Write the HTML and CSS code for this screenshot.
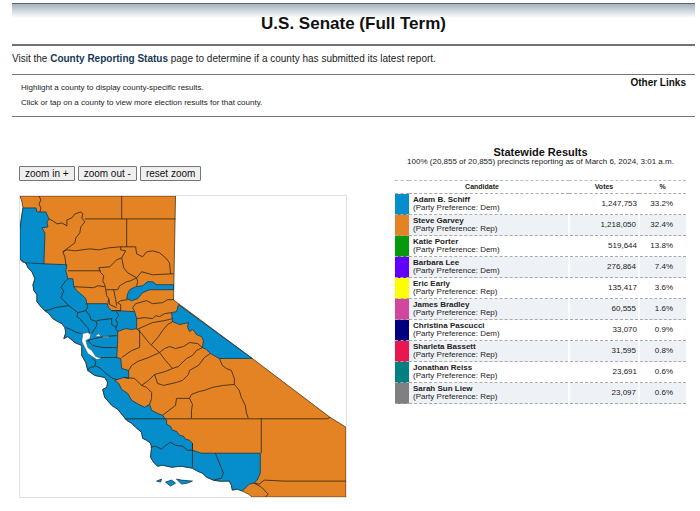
FILE: index.html
```html
<!DOCTYPE html>
<html lang="en">
<head>
<meta charset="utf-8">
<meta name="viewport" content="width=device-width, initial-scale=1">
<title>U.S. Senate (Full Term)</title>
<link rel="stylesheet" href="styles.css">
</head>
<body>
<header class="page-header"><h1>U.S. Senate (Full Term)</h1></header>
<p class="status-note">Visit the <a href="#status">County Reporting Status</a> page to determine if a county has submitted its latest report.</p>
<section class="intro">
  <div class="hints">
    <p>Highlight a county to display county-specific results.</p>
    <p>Click or tap on a county to view more election results for that county.</p>
  </div>
  <h2 class="other-links">Other Links</h2>
</section>
<main class="results">
  <section class="map-panel">
    <div class="zoom-controls">
      <button type="button">zoom in +</button>
      <button type="button">zoom out -</button>
      <button type="button">reset zoom</button>
    </div>
    <svg class="map" viewBox="20 195 327 302" role="img" aria-label="County results map of California">
      <path class="rep" d="M20 195L22 201L23 207L21 220L20 230V258L22 261L26 262L28 267L32 271L35 278L33 284L34 290L37 294V301L41 306L45 310L49 313L53 318L58 321L62 323L65 327L66 332L64 338L68 336L75 342L82 345L82 355L86 362L88 370L95 375L105 377L108 382L107 387L103 389L105 397L112 405L118 409L123 415L127 420L132 423L136 427L142 432L143 438L147 440L151 443L152 447L151 457L154 462L158 466L163 465L172 467L182 466L187 467L193 468L198 471L203 473L207 477L214 480L220 481L230 481L232 485L233 490L238 489L243 491L249 494L253 497H347V427L331 417L253 358L175 300L174 299L176 195Z"/>
      <path class="dem" d="M23 207H36L37 211L46 211L49 218L47 221L48 226L42 227L45 232L44 263H26L20 258V230L21 220Z"/>
      <path class="dem" d="M26 262L44 263L67 264L66 270L68 278H73L74 286L77 290L83 295L86 298L87 303H107L109 307L112 310H117L135 311L137 318V328L132 329L126 328L118 331V340L117 357L121 358L122 368L129 370V378L124 377L115 380L119 383L122 389L128 393L132 400L139 404L145 407L150 404L152 410L158 413L163 415L167 420V424L171 426L173 430L177 431L180 435L184 436L186 439L190 440L193 443V450L202 453H261V473L258 480L255 483L250 484L243 491L238 489L233 490L232 485L230 481L220 481L214 480L207 477L203 473L198 471L193 468L187 467L182 466L172 467L163 465L158 466L154 462L151 457L152 447L151 443L147 440L143 438L142 432L136 427L132 423L127 420L123 415L118 409L112 405L105 397L103 389L107 387L108 382L105 377L95 375L88 370L86 362L82 355V345L75 342L68 336L64 338L66 332L65 327L62 323L58 321L53 318L49 313L45 310L41 306L37 301V294L34 290L33 284L35 278L32 271L28 267Z"/>
      <path class="dem" d="M127 298L128 293L130 289L136 286L143 285L148 281L153 281L157 284H174V289H150L143 292L138 298L132 300Z"/>
      <path class="dem" d="M179 304L253 358H220L211 353L207 349L203 347L204 340L202 336L197 334L195 331L193 329L190 331L188 326L189 322L180 324L173 321L172 312L177 311Z"/>
      <path class="county" d="M39 195L41 199L39 203L41 207L40 211M122 195V218M85 218H176M49 218L53 220L57 223L62 222L67 225L67 219L72 217L75 213L81 211L83 213L82 217L85 221L81 226L80 232L76 237L75 242L63 251L65 256L66 264M63 251L67 249L75 250L90 248L99 249L109 247L120 246H136M127 218V246M136 246L137 253L143 256L147 251L153 250L160 252L166 257L170 262L171 273M174 273L153 274L142 271L137 277L128 272L124 267L122 257L126 250L121 249V246M122 257L117 259L110 266L99 267L101 272L104 275L103 280L105 284L106 289H118L120 285L127 281L131 280L137 277L138 281L137 285M68 270H101M74 286L94 287L98 285L105 286M106 289L107 295L109 298L108 304M114 289L116 299L117 305M109 298L110 304L117 307M112 310L121 310V304L118 302L121 300L128 299M135 311L133 307L136 303L147 300L153 303L163 302L168 299L174 299M137 318L145 317L153 318L156 315L160 316L165 313L172 312M137 329L146 325L153 322L165 320L173 318M173 321L168 324L163 330L159 336L152 344M137 328L142 333L150 343L160 352L166 360L173 368L166 371L155 374L149 380L142 385M140 329V347L132 350L122 357M129 370L132 365L138 361L149 357L160 352L165 348L170 346L176 348L184 346L190 342L198 343L203 347M173 368L179 366L187 358L193 355L197 350L203 347M155 374L158 383L164 385L177 382L183 380L189 374L190 370L199 365L205 357L211 353M124 377L135 378L142 385L147 387L152 392V398L150 404M220 358L223 365L227 368L232 370L235 378V384L240 390L242 397L246 405L247 412L249 418M235 384L224 385L213 387L205 390L200 391L192 394L190 398L177 398L176 405L163 415M190 398L193 404L192 410V418M125 418.500H328L331 417M262 418V453M255 483L260 484L265 480L286 481H347M255 483L262 487L269 494L266 497M193 443V467M151 447L156 446L162 449L165 446L171 442L176 445L183 446L188 450L193 450M216 453L224 473L222 478L214 480M68 278L65 281L61 287L64 290L61 297L69 305L78 312L86 310L88 306L87 303M45 310L50 309L55 307L69 305M78 312L77 316L80 318L84 323L88 327L90 333M86 310L90 315L91 319L97 321V325L92 333M97 320L103 319L112 318L112 324L117 327M117 311L119 315L116 319L118 323L116 328L118 331M66 327L71 329L77 332L82 333M88 340L95 338L104 336L117 335M88 340L93 345L103 347H117M101 357H117M93 358L96 361L95 365L101 368L106 373L113 378L117 379M88 370L90 367L95 366"/>
      <path class="water" d="M83 333L88 332L91 334L90 338L86 340L88 347L92 350L96 356L102 358L97 359L88 353L84 345L82 341ZM95 336L99 333L101 336ZM103 336H109V337H103Z"/>
      <path class="dem" d="M157 481L162 479L161 482ZM166 482L172 480L176 483L171 486ZM177 479L182 480L193 481L188 483L182 484Z"/>
    </svg>
  </section>
  <section class="tally">
    <h2>Statewide Results</h2>
    <p class="reporting">100% (20,855 of 20,855) precincts reporting as of March 6, 2024, 3:01 a.m.</p>
    <table>
      <colgroup><col class="col-key"><col class="col-name"><col class="col-votes"><col class="col-share"></colgroup>
      <thead><tr><th colspan="2" scope="col">Candidate</th><th scope="col">Votes</th><th scope="col">%</th></tr></thead>
      <tbody>
        <tr><td class="schiff"></td><td><b>Adam B. Schiff</b><br>(Party Preference: Dem)</td><td>1,247,753</td><td>33.2%</td></tr>
        <tr><td class="garvey"></td><td><b>Steve Garvey</b><br>(Party Preference: Rep)</td><td>1,218,050</td><td>32.4%</td></tr>
        <tr><td class="porter"></td><td><b>Katie Porter</b><br>(Party Preference: Dem)</td><td>519,644</td><td>13.8%</td></tr>
        <tr><td class="lee"></td><td><b>Barbara Lee</b><br>(Party Preference: Dem)</td><td>276,864</td><td>7.4%</td></tr>
        <tr><td class="early"></td><td><b>Eric Early</b><br>(Party Preference: Rep)</td><td>135,417</td><td>3.6%</td></tr>
        <tr><td class="bradley"></td><td><b>James Bradley</b><br>(Party Preference: Rep)</td><td>60,555</td><td>1.6%</td></tr>
        <tr><td class="pascucci"></td><td><b>Christina Pascucci</b><br>(Party Preference: Dem)</td><td>33,070</td><td>0.9%</td></tr>
        <tr><td class="bassett"></td><td><b>Sharleta Bassett</b><br>(Party Preference: Rep)</td><td>31,595</td><td>0.8%</td></tr>
        <tr><td class="reiss"></td><td><b>Jonathan Reiss</b><br>(Party Preference: Rep)</td><td>23,691</td><td>0.6%</td></tr>
        <tr><td class="liew"></td><td><b>Sarah Sun Liew</b><br>(Party Preference: Rep)</td><td>23,097</td><td>0.6%</td></tr>
      </tbody>
    </table>
  </section>
</main>
</body>
</html>
```
FILE: styles.css
```css
* { box-sizing: border-box; }
body {
  margin: 3px 5px 8px 12px;
  background: #fff;
  color: #222;
  font-family: "Liberation Sans", Arial, sans-serif;
  font-size: 10px;
}
h1, h2, p { margin: 0; }
.page-header {
  padding: 8px 0;
  border-top: 1px solid #5a6570;
  border-bottom: 2px solid #707274;
  background: linear-gradient(#a4b2bf, #fff 14px);
  text-align: center;
}
h1 { font-size: 17px; line-height: 24px; color: #111; }
.status-note { padding: 5px 0 7px; line-height: 16px; }
.status-note a { color: #173a58; font-weight: bold; text-decoration: none; }
.intro {
  display: flex;
  justify-content: space-between;
  padding: 2px 9px 6px;
  border-top: 1px solid #777;
  border-bottom: 1px solid #777;
}
.hints { padding-top: 3px; font-size: 8px; line-height: 15px; }
.other-links { font-size: 10px; line-height: 12px; color: #111; }
.results {
  display: grid;
  grid-template-columns: 328fr 291fr;
  gap: 48px;
  align-items: start;
  padding: 29px 9px 0 7px;
}
.map-panel { padding-top: 20px; }
.zoom-controls { display: flex; gap: 3px; }
button {
  height: 15px;
  padding: 0 5px;
  border: 1px solid #767676;
  border-radius: 1px;
  background: #efefef;
  color: #111;
  font: 10px/13px "Liberation Sans", Arial, sans-serif;
}
.map { display: block; width: 100%; margin-top: 14px; border: 1px solid #dfe1e6; }
.rep { fill: #e38323; stroke: #52330f; stroke-width: .8; }
.dem { fill: #058ecb; stroke: #12394e; stroke-width: .8; }
.county { fill: none; stroke: #2c2415; stroke-width: .8; stroke-linejoin: round; }
.water { fill: #fff; stroke: #12394e; stroke-width: .4; }
.tally h2 { font-size: 11px; line-height: 12px; text-align: center; color: #111; }
.reporting { font-size: 8px; line-height: 8px; text-align: center; }
table {
  width: 100%;
  margin-top: 14px;
  border-collapse: collapse;
  table-layout: fixed;
  font-size: 8px;
  line-height: 8px;
  border-top: 1px dashed #bbb;
}
.col-key { width: 14px; }
.col-votes { width: 70px; }
.col-share { width: 47px; }
th { height: 13px; padding: 0; font-size: 7px; }
td { height: 21px; padding: 0 0 0 4px; }
tr { border-bottom: 1px dashed #aaa; }
td:nth-child(3) { padding-right: 2px; text-align: right; }
td:nth-child(4) { padding-right: 13px; text-align: right; }
tbody tr:nth-child(even) { background: #eef2f6; }
tbody tr:nth-child(even) td:nth-child(n+3) { border-left: 2px solid #fff; }
.schiff { background: #058ecb; }
.garvey { background: #e38323; }
.porter { background: #059a0c; }
.lee { background: #6200ff; }
.early { background: #ff0; }
.bradley { background: #d1479f; }
.pascucci { background: #000080; }
.bassett { background: #ea174f; }
.reiss { background: #008080; }
.liew { background: #808080; }
```
